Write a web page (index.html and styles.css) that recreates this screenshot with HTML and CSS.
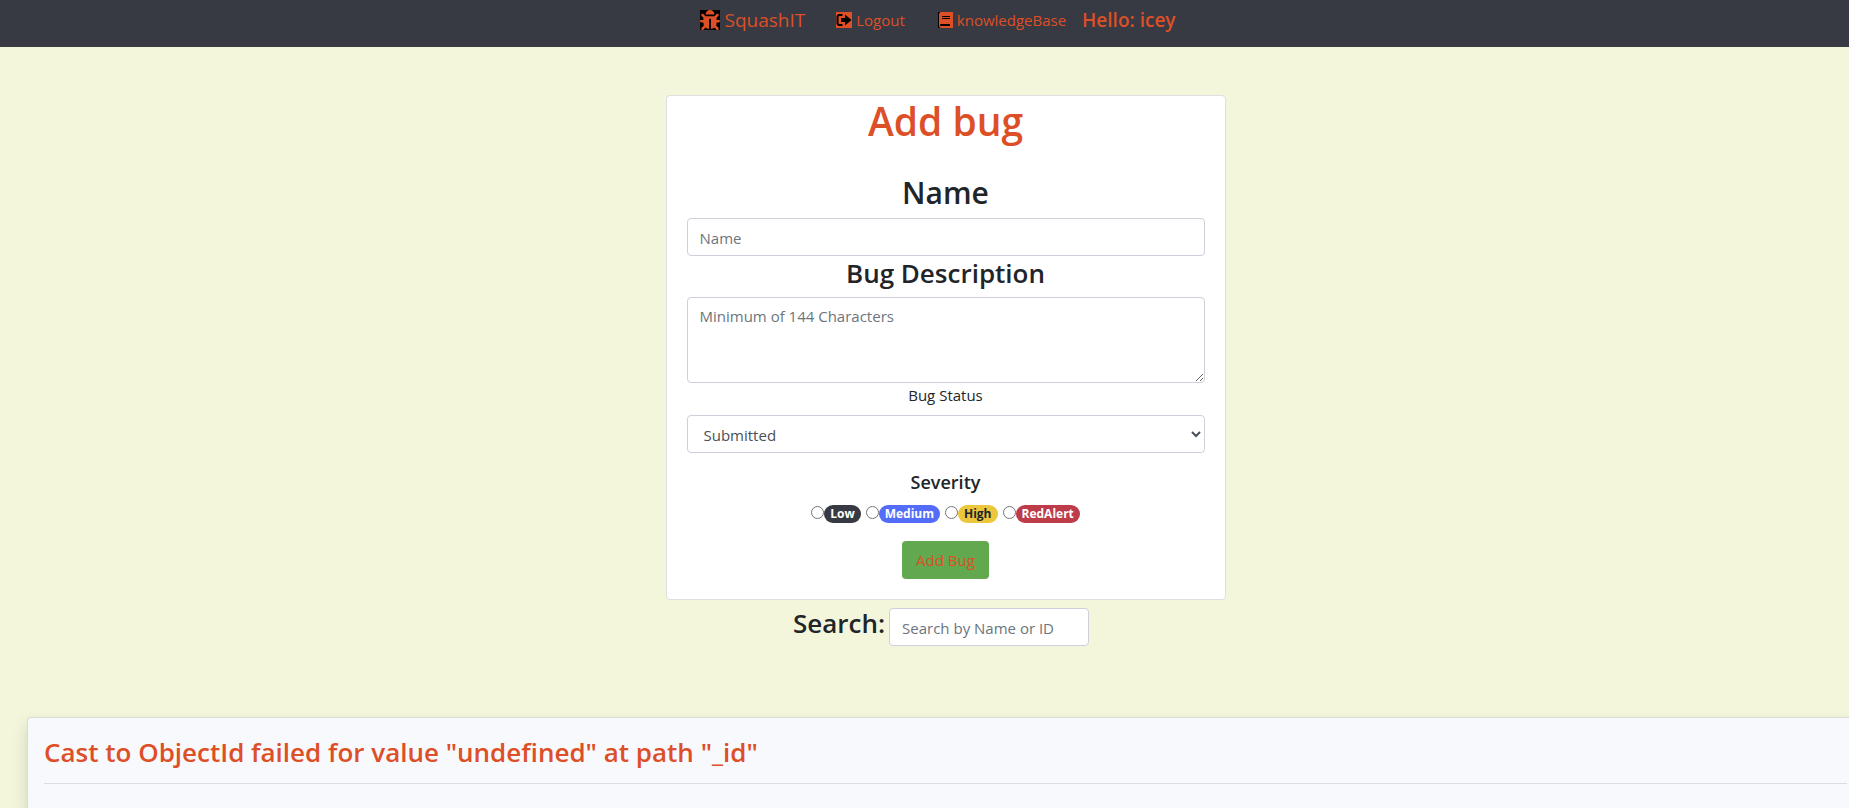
FILE: index.html
```html
<!DOCTYPE html>
<html lang="en">
<head>
<meta charset="utf-8">
<title>SquashIT</title>
<link rel="stylesheet" href="styles.css">
</head>
<body>
<nav class="navbar">
  <a class="brand" href="#">
    <svg class="icon-lg" viewBox="0 0 512 512" aria-hidden="true"><rect width="512" height="512" fill="#000"/><path fill="currentColor" d="M511.988 288.9c-.478 17.43-15.217 31.1-32.653 31.1H424v16c0 21.864-4.882 42.584-13.6 61.145l60.228 60.228c12.496 12.497 12.496 32.758 0 45.255-12.498 12.497-32.759 12.496-45.256 0l-54.736-54.736C345.886 467.965 314.351 480 280 480V236c0-6.627-5.373-12-12-12h-24c-6.627 0-12 5.373-12 12v244c-34.351 0-65.886-12.035-90.636-32.108l-54.736 54.736c-12.498 12.497-32.759 12.496-45.256 0-12.496-12.497-12.496-32.758 0-45.255l60.228-60.228C92.882 378.584 88 357.864 88 336v-16H32.666C15.23 320 .491 306.33.013 288.9-.484 270.816 14.028 256 32 256h56v-58.745l-46.628-46.628c-12.496-12.497-12.496-32.758 0-45.255 12.498-12.497 32.758-12.497 45.256 0L141.255 160h229.489l54.627-54.627c12.498-12.497 32.758-12.497 45.256 0 12.496 12.497 12.496 32.758 0 45.255L424 197.255V256h56c17.972 0 32.484 14.816 31.988 32.9zM257 0c-61.856 0-112 50.144-112 112h224C369 50.144 318.856 0 257 0z"/></svg>
    SquashIT</a>
  <a class="nav-link" href="#">
    <svg class="icon" viewBox="0 0 16 16" aria-hidden="true"><rect width="16" height="16" fill="currentColor"/><path d="M6.500 3H3.500Q1.500 3 1.500 5V11Q1.500 13 3.500 13H6.500" fill="none" stroke="#000" stroke-width="2"/><path d="M5 6H9V2.500L15.500 8 9 13.500V10H5Z"/></svg>
    Logout</a>
  <a class="nav-link" href="#">
    <svg class="icon" viewBox="0 0 16 16" aria-hidden="true"><rect x="1" width="15" height="16" fill="#000"/><path fill="currentColor" d="M4 0H16V16H4Q2 16 2 13V3Q2 0 4 0Z"/><path d="M5 4H13V5H5ZM5 6H13V7H5ZM4 12H13V14H4Q3 14 3 13T4 12Z"/></svg>
    knowledgeBase</a>
  <span class="greeting">Hello: icey</span>
</nav>
<main class="page">
  <form class="card">
    <h1>Add bug</h1>
    <h2><label for="name">Name</label></h2>
    <input class="control" id="name" type="text" placeholder="Name">
    <h3><label for="description">Bug Description</label></h3>
    <textarea class="control" id="description" rows="3" placeholder="Minimum of 144 Characters"></textarea>
    <label class="status-label" for="status">Bug Status</label>
    <select class="control" id="status"><option>Submitted</option></select>
    <fieldset>
      <legend>Severity</legend>
      <div class="choices">
        <span class="choice"><input type="radio" name="severity" id="low"><label class="badge low" for="low">Low</label></span>
        <span class="choice"><input type="radio" name="severity" id="medium"><label class="badge medium" for="medium">Medium</label></span>
        <span class="choice"><input type="radio" name="severity" id="high"><label class="badge high" for="high">High</label></span>
        <span class="choice"><input type="radio" name="severity" id="red"><label class="badge red" for="red">RedAlert</label></span>
      </div>
    </fieldset>
    <button type="button">Add Bug</button>
  </form>
  <div class="search">
    <label for="search">Search:</label>
    <input class="control" id="search" type="text" placeholder="Search by Name or ID">
  </div>
  <section class="error">
    <h3>Cast to ObjectId failed for value "undefined" at path "_id"</h3>
    <hr>
  </section>
</main>
</body>
</html>
```
FILE: styles.css
```css
* { box-sizing: border-box; }
body {
  display: flex;
  flex-direction: column;
  margin: 0;
  min-height: 100vh;
  overflow-x: hidden;
  background: #f4f6dc;
  color: #212529;
  font-family: "Segoe UI", "Open Sans", "Noto Sans", sans-serif;
  font-size: 15px;
  line-height: 24px;
}
h1, h2, h3 { margin: 0; font-weight: 600; }
.navbar {
  display: flex;
  justify-content: center;
  align-items: flex-start;
  height: 47px;
  padding: 8px 0 0 26px;
  background: #373a42;
  color: #dd4f27;
}
.navbar a { color: inherit; text-decoration: none; display: flex; align-items: center; }
.brand { gap: 5px; font-size: 19px; margin-right: 31px; }
.nav-link { gap: 4px; margin-right: 32px; }
.nav-link + .nav-link { margin-right: 16px; }
.icon { width: 16px; height: 16px; }
.icon-lg { width: 20px; height: 20px; }
.greeting { font-size: 19px; font-weight: 600; }
.page {
  flex: 1;
  display: flex;
  flex-direction: column;
  padding: 48px 0 0 42px;
}
.card {
  width: 560px;
  max-width: 100%;
  margin: 0 auto;
  padding: 0 20px;
  display: flex;
  flex-direction: column;
  background: #fff;
  border: 1px solid #dddfe0;
  border-radius: 4px;
  text-align: center;
}
h1 { font-size: 39px; line-height: 50px; margin-bottom: 27px; color: #dd4f27; }
h2 { font-size: 30px; line-height: 40px; margin-bottom: 5px; }
h3 { font-size: 26px; line-height: 34px; }
.card h3 { margin-bottom: 7px; }
.control {
  display: block;
  width: 100%;
  height: 38px;
  padding: 8px 12px 6px;
  border: 1px solid #ced0da;
  border-radius: 4px;
  background: #fff;
  color: #495057;
  font: inherit;
}
.control::placeholder { color: #6c757d; opacity: 1; }
textarea.control { height: 86px; padding-top: 6px; resize: vertical; }
select.control { padding: 7px 12px 6px; }
.status-label { margin-bottom: 8px; }
fieldset { margin: 0; padding: 0; border: 0; }
legend { width: 100%; padding: 17px 0 11px; font-size: 18px; font-weight: 600; }
.choices { display: flex; justify-content: center; gap: 5px; }
.choice { display: flex; align-items: flex-start; }
.choice input { width: 13px; height: 13px; margin: 1px 0 0; }
.badge {
  height: 18px;
  padding: 0 6px;
  border-radius: 9px;
  color: #fff;
  font-size: 12px;
  font-weight: 700;
  line-height: 18px;
}
.low { background: #373a42; }
.medium { background: #536dfa; }
.high { background: #ecc63b; color: #212529; }
.red { background: #be3b4a; }
button {
  align-self: center;
  height: 38px;
  margin: 18px 0 20px;
  padding: 0 14px;
  border: 0;
  border-radius: 4px;
  background: #62a84e;
  color: #dd4f27;
  font: inherit;
}
.search { display: flex; justify-content: center; gap: 4px; padding: 8px 9px 0 0; }
.search label { font-size: 26px; font-weight: 600; line-height: 30px; }
.search .control { width: 200px; }
.error {
  flex: 1;
  margin: 71px -15px 0;
  padding: 17px 16px 0;
  background: #f8f9fc;
  border: 1px solid #d9dbd6;
  border-bottom: 0;
  border-radius: 4px 4px 0 0;
  box-shadow: 0 8px 16px rgba(0, 0, 0, .15);
}
.error h3 { color: #dd4f27; }
hr { height: 1px; margin: 14px 0 0; border: 0; background: #dcdde0; }
```
